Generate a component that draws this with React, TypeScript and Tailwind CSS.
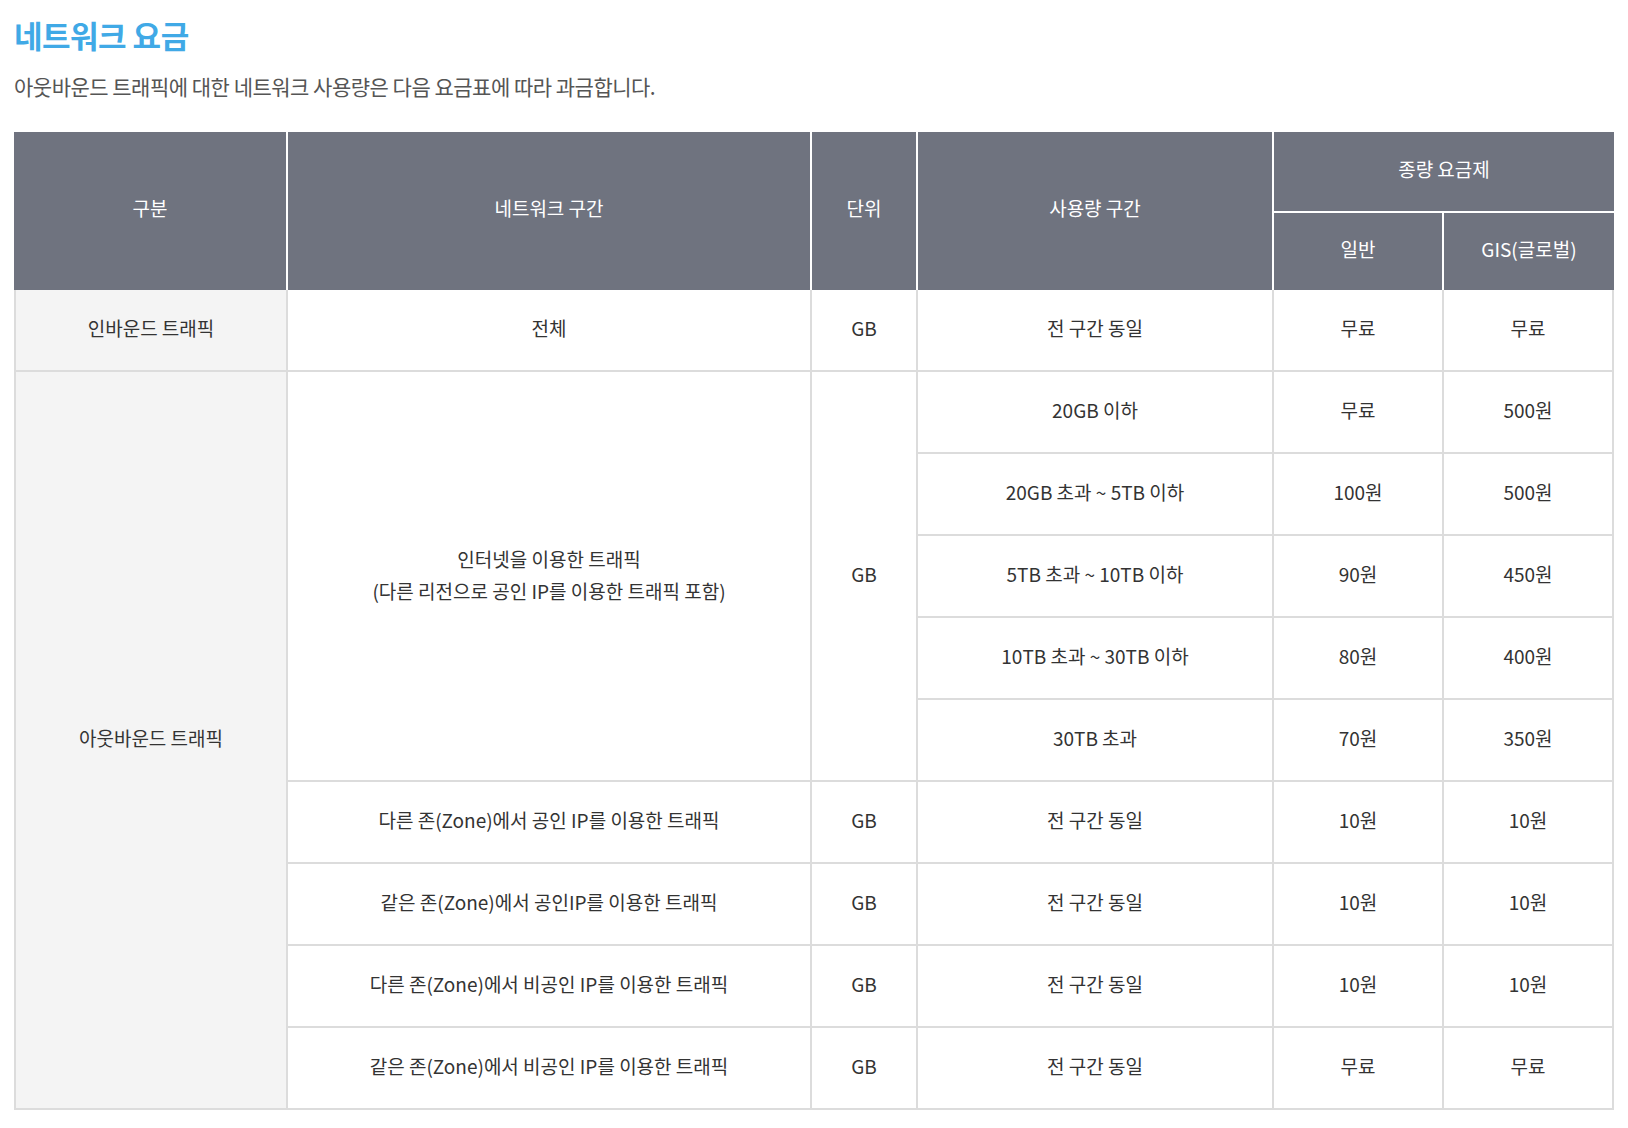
const font = { fontFamily: '"Noto Sans CJK KR", "Noto Sans", sans-serif' };

const th = "flex items-center justify-center pb-[5px] bg-[#6f737f] text-white text-[19px]";
const td = "flex items-center justify-center pb-[3px] text-center border-r-2 border-b-2 border-[#dcdcdc] text-[#333] text-[19px]";

const tiers = [
  ["20GB 이하", "무료", "500원"],
  ["20GB 초과 ~ 5TB 이하", "100원", "500원"],
  ["5TB 초과 ~ 10TB 이하", "90원", "450원"],
  ["10TB 초과 ~ 30TB 이하", "80원", "400원"],
  ["30TB 초과", "70원", "350원"],
];

const others = [
  ["다른 존(Zone)에서 공인 IP를 이용한 트래픽", "10원", "10원"],
  ["같은 존(Zone)에서 공인IP를 이용한 트래픽", "10원", "10원"],
  ["다른 존(Zone)에서 비공인 IP를 이용한 트래픽", "10원", "10원"],
  ["같은 존(Zone)에서 비공인 IP를 이용한 트래픽", "무료", "무료"],
];

export default function App() {
  return (
    <div className="min-h-screen bg-white px-[14px] pb-10" style={font}>
      {/* Title */}
      <h2 className="pt-[15px] text-[31px] font-bold leading-[40px] tracking-[-0.5px] text-[#40a9e6]">
        네트워크 요금
      </h2>
      <p className="mt-[17px] text-[21px] leading-[28px] tracking-[-0.5px] text-[#555]">
        아웃바운드 트래픽에 대한 네트워크 사용량은 다음 요금표에 따라 과금합니다.
      </p>

      {/* Price table */}
      <div className="mt-[32px] grid grid-cols-[274px_524px_106px_356px_170px_170px] grid-rows-[81px_77px_repeat(10,82px)]">
        {/* Header */}
        <div className={`${th} row-span-2 border-r-2 border-white`}>구분</div>
        <div className={`${th} row-span-2 border-r-2 border-white`}>네트워크 구간</div>
        <div className={`${th} row-span-2 border-r-2 border-white`}>단위</div>
        <div className={`${th} row-span-2 border-r-2 border-white`}>사용량 구간</div>
        <div className={`${th} col-span-2 border-b-2 border-white`}>종량 요금제</div>
        <div className={`${th} border-r-2 border-white`}>일반</div>
        <div className={th}>GIS(글로벌)</div>

        {/* Inbound */}
        <div className={`${td} border-l-2 bg-[#f4f4f4]`}>인바운드 트래픽</div>
        <div className={td}>전체</div>
        <div className={td}>GB</div>
        <div className={td}>전 구간 동일</div>
        <div className={td}>무료</div>
        <div className={td}>무료</div>

        {/* Outbound */}
        <div className={`${td} row-span-9 border-l-2 bg-[#f4f4f4]`}>아웃바운드 트래픽</div>
        <div className={`${td} row-span-5 flex-col leading-[32px]`}>
          <span>인터넷을 이용한 트래픽</span>
          <span>(다른 리전으로 공인 IP를 이용한 트래픽 포함)</span>
        </div>
        <div className={`${td} row-span-5`}>GB</div>
        {tiers.map(([range, normal, gis]) => (
          <div key={range} className="contents">
            <div className={td}>{range}</div>
            <div className={td}>{normal}</div>
            <div className={td}>{gis}</div>
          </div>
        ))}

        {others.map(([name, normal, gis]) => (
          <div key={name} className="contents">
            <div className={td}>{name}</div>
            <div className={td}>GB</div>
            <div className={td}>전 구간 동일</div>
            <div className={td}>{normal}</div>
            <div className={td}>{gis}</div>
          </div>
        ))}
      </div>
    </div>
  );
}
